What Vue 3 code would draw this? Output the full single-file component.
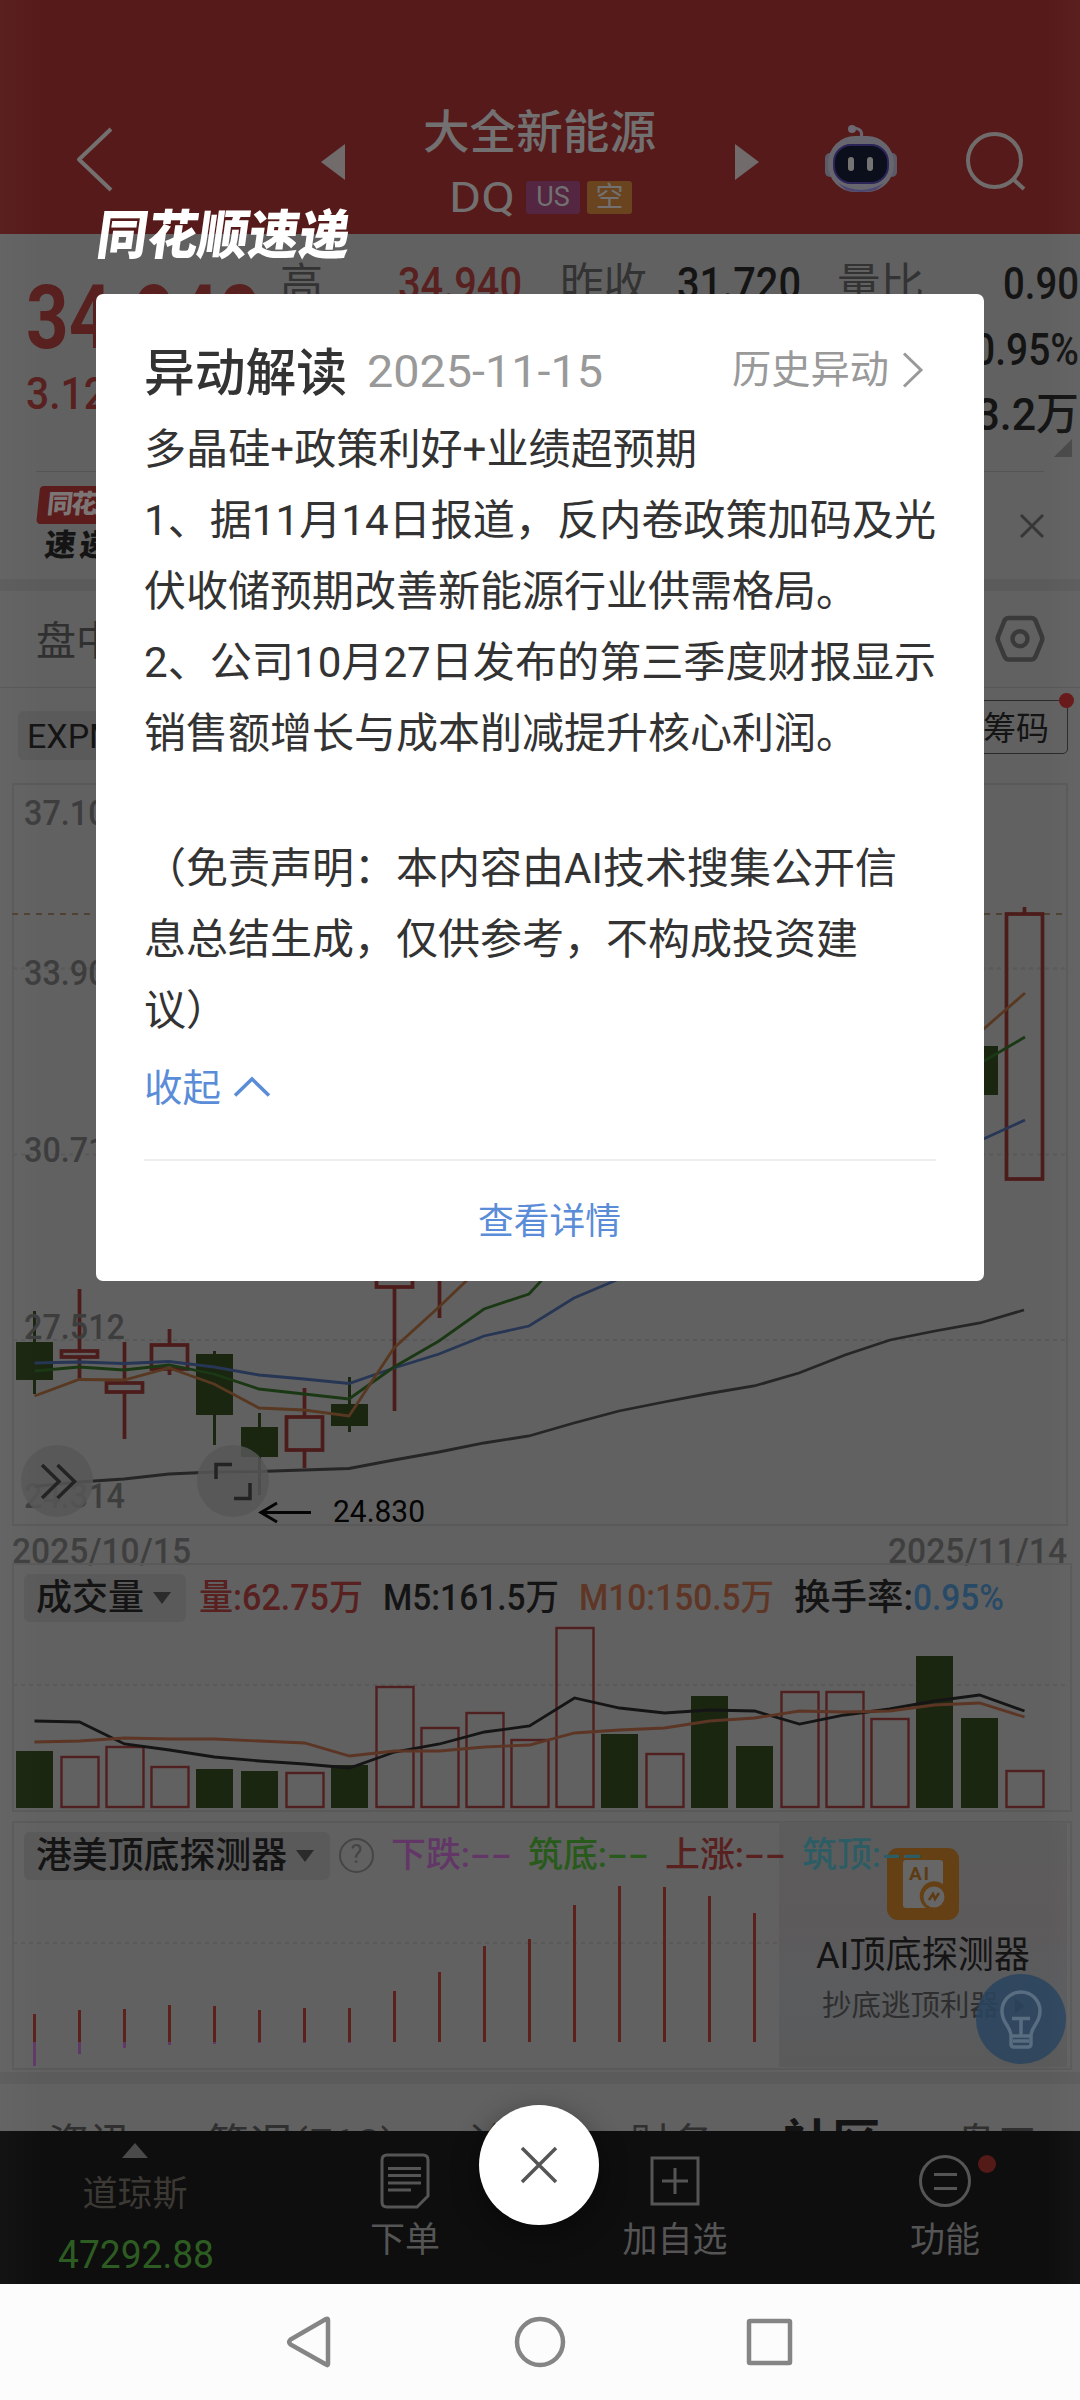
<script setup>
// Stretches a text run to a given width while keeping it in the flow
const vFit = {
  mounted(el, { value }) {
    const natural = el.getBoundingClientRect().width
    el.style.transform = `scaleX(${value / natural})`
    el.style.marginRight = `${value - natural}px`
  },
}

const cx = (i) => 34.5 + i * 45

const candles = [
  { i: 0, up: false, t: 1342, b: 1380, h: 1311, l: 1394 },
  { i: 1, up: true, t: 1351, b: 1357, h: 1289, l: 1380 },
  { i: 2, up: true, t: 1383, b: 1392, h: 1342, l: 1439 },
  { i: 3, up: true, t: 1345, b: 1369, h: 1329, l: 1375 },
  { i: 4, up: false, t: 1354, b: 1415, h: 1351, l: 1445 },
  { i: 5, up: false, t: 1427, b: 1457, h: 1413, l: 1495 },
  { i: 6, up: true, t: 1417, b: 1450, h: 1388, l: 1468 },
  { i: 7, up: false, t: 1404, b: 1426, h: 1377, l: 1432 },
  { i: 8, up: true, t: 1210, b: 1287, h: 1190, l: 1411 },
  { i: 9, up: true, t: 1160, b: 1240, h: 1140, l: 1318 },
  { i: 21, up: false, t: 1046, b: 1095, h: 1040, l: 1095 },
  { i: 22, up: true, t: 914, b: 1179, h: 907, l: 1179 },
]
const priceLabels = [
  { v: '37.108', y: 825 },
  { v: '33.909', y: 985 },
  { v: '30.711', y: 1162 },
  { v: '27.512', y: 1339 },
  { v: '24.314', y: 1508 },
]
const ma5 = '34.5,1396 79,1379.5 124,1380 169,1368 214,1384 259,1408 304,1410 349,1416 394,1348 439,1307 484,1264 529,1210 800,1120 979,1033 1025,993'
const ma10 = '34.5,1371 79,1367 124,1370 169,1365 214,1374 259,1389 304,1394 349,1399 394,1367 439,1341 484,1309 529,1294 574,1245 800,1150 979,1064 1025,1037'
const ma20 = '34.5,1363 79,1362 124,1363.5 169,1361.5 214,1367 259,1375 304,1379 349,1383.5 394,1368 439,1354 484,1336 529,1326 574,1298 619,1279 800,1200 979,1141 1025,1120'
const ma60 = '34.5,1486.5 79,1482 124,1479 169,1474 214,1472 259,1471.5 304,1470 349,1468.5 394,1460 439,1452 484,1443 529,1436 574,1423 619,1411 664,1402 709,1393.5 754,1386 799,1373 845,1355 890,1340 935,1331 980,1323 1024,1310'

const volumes = [
  [1751, 0], [1756, 1], [1746, 1], [1766, 1], [1769, 0], [1771, 0], [1772, 1], [1765, 0],
  [1686, 1], [1727, 1], [1712, 1], [1739, 1], [1627, 1], [1734, 0], [1753, 1], [1696, 0],
  [1746, 0], [1691, 1], [1691, 1], [1718, 1], [1656, 0], [1718, 0], [1770, 1],
]
const toPoints = (ys) => ys.map((y, i) => `${cx(i)},${y}`).join(' ')
const volM5 = toPoints([1721, 1722, 1744, 1750, 1757, 1761, 1764, 1768, 1752, 1744, 1732, 1726, 1698, 1708, 1713, 1710, 1711, 1724, 1715, 1709, 1701, 1695, 1711])
const volM10 = toPoints([1742, 1741, 1738, 1739, 1739, 1741, 1743, 1756, 1751, 1751, 1747, 1745, 1733, 1730, 1728, 1721, 1718, 1711, 1712, 1711, 1705, 1703, 1717])

const signals = [2014, 2010, 2009, 2005, 2006, 2010, 2008, 2008, 1991, 1972, 1946, 1939, 1905, 1886, 1887, 1896, 1913]
const drops = [2066, 2054, 2048, 2045, 2044, 2043, 2043, 2043]
const states = [
  { name: '下跌', tone: 'purple' },
  { name: '筑底', tone: 'green' },
  { name: '上涨', tone: 'red' },
  { name: '筑顶', tone: 'teal' },
]
</script>

<template>
  <div class="screen">
    <header class="topbar">
      <svg class="back" width="60" height="80" viewBox="66 120 60 80"><path d="M111 129 79 159.500 111 190" /></svg>
      <svg class="tri" width="26" height="36" viewBox="0 0 26 36"><path d="M25 0V36L1 18Z" /></svg>
      <div class="stock">
        <div class="name"><span v-fit="233">大全新能源</span></div>
        <div class="code">
          <span v-fit="66" class="ticker">DQ</span>
          <span class="tag us">US</span>
          <span class="tag short">空</span>
        </div>
      </div>
      <svg class="tri right" width="26" height="36" viewBox="0 0 26 36"><path d="M1 0V36L25 18Z" /></svg>
      <svg class="robot" width="76" height="72" viewBox="823 124 76 72">
        <path d="M861 138q3-9-7-10" fill="none" stroke="#6b6570" stroke-width="3" />
        <circle cx="852" cy="129" r="4" fill="#6d6872" />
        <rect x="825" y="153" width="10" height="24" rx="5" fill="#5b5a66" />
        <rect x="887" y="153" width="10" height="24" rx="5" fill="#5b5a66" />
        <rect x="828" y="136" width="66" height="56" rx="27" fill="#67656d" />
        <path d="M838 183q23 14 46 0l-8 7q-15 4-30 0z" fill="#4b4672" />
        <rect x="834" y="145" width="54" height="38" rx="17" fill="#0b0e1b" stroke="#2b2459" stroke-width="2" />
        <rect x="848" y="157" width="6" height="14" rx="3" fill="#747474" />
        <rect x="867" y="157" width="6" height="14" rx="3" fill="#747474" />
      </svg>
      <svg class="search" width="66" height="66" viewBox="962 128 66 66"><circle cx="994.500" cy="160.500" r="26.500" /><path d="M1013 179 1024 189" /></svg>
    </header>

    <section class="quote">
      <div class="price"><b v-fit="235">34.940</b><span v-fit="104">3.120</span></div>
      <div class="cell k1"><span v-fit="43" class="k">高</span></div>
      <div class="cell v1 red"><span v-fit="124">34.940</span></div>
      <div class="cell k2"><span v-fit="87" class="k">昨收</span></div>
      <div class="cell v2"><span v-fit="124">31.720</span></div>
      <div class="cell k3"><span v-fit="87" class="k">量比</span></div>
      <div class="stack">
        <div><span v-fit="76">0.90</span></div>
        <div><span v-fit="106">0.95%</span></div>
        <div><span v-fit="128">13.2万</span></div>
      </div>
      <svg class="corner" width="18" height="18"><path d="M18 0V18H0Z" /></svg>
    </section>

    <section class="express">
      <div class="badge">
        <div class="badge-top">同花顺</div>
        <div class="badge-bottom">速递</div>
      </div>
      <svg width="26" height="26" viewBox="0 0 26 26"><path d="M2 2 24 24M24 2 2 24" /></svg>
    </section>
    <div class="band"></div>

    <section class="periods">
      <span>盘中</span>
      <svg width="52" height="50" viewBox="994 614 52 50">
        <path d="M1008.500 618H1031.500Q1034 618 1035.500 620.500L1041.500 635.500Q1043 639 1041.500 642L1035.500 656.500Q1034 659.500 1031.500 659.500H1008.500Q1006 659.500 1004.500 656.500L998.500 642Q997 639 998.500 635.500L1004.500 620.500Q1006 618 1008.500 618Z" />
        <circle cx="1020" cy="638.700" r="7.500" />
      </svg>
    </section>

    <section class="selectors">
      <span class="pill expma">EXPMA</span>
      <span class="chips">筹码<i></i></span>
    </section>

    <svg class="kline" width="1080" height="755" viewBox="0 783 1080 755">
      <g class="frame">
        <rect x="13" y="784" width="1054" height="741" />
        <path stroke-dasharray="4 4" d="M13 968.500H1067M13 1154.500H1067M13 1340H1067" />
      </g>
      <path d="M12 914H1067" stroke="#4e4131" stroke-width="2" stroke-dasharray="6 6" />
      <g v-for="c in candles" :key="c.i" :class="c.up ? 'up' : 'down'">
        <line :x1="cx(c.i)" :x2="cx(c.i)" :y1="c.h" :y2="c.up ? c.t : c.l" />
        <line v-if="c.up" :x1="cx(c.i)" :x2="cx(c.i)" :y1="c.b" :y2="c.l" />
        <rect v-if="c.up" :x="cx(c.i) - 18" :y="c.t" width="36" :height="c.b - c.t" />
        <rect v-else :x="cx(c.i) - 18.500" :y="c.t" width="37" :height="c.b - c.t" />
      </g>
      <text v-for="p in priceLabels" :key="p.v" class="axis" x="24" :y="p.y" textLength="101" lengthAdjust="spacingAndGlyphs">{{ p.v }}</text>
      <g fill="none" stroke-width="2.800">
        <polyline :points="ma60" stroke="#262626" />
        <polyline :points="ma20" stroke="#263654" />
        <polyline :points="ma10" stroke="#1b3815" />
        <polyline :points="ma5" stroke="#583820" />
      </g>
      <g class="round">
        <circle cx="57" cy="1481" r="36" /><circle cx="233" cy="1481" r="36" />
        <path d="M42 1465 59 1481.500 42 1498M57.500 1465 74.500 1481.500 57.500 1498M216 1479V1464.500H232M250 1483V1498.500H234" />
      </g>
      <path d="M311 1512.500H261M277 1503 261 1512.500 277 1522" fill="none" stroke="#050505" stroke-width="3" />
      <text x="333" y="1522" font-size="32" fill="#050505" textLength="92" lengthAdjust="spacingAndGlyphs">24.830</text>
    </svg>
    <div class="dates"><span v-fit="179">2025/10/15</span><span v-fit="179">2025/11/14</span></div>

    <section class="volume">
      <div class="legend">
        <span class="pill"><span v-fit="108">成交量</span><i></i></span>
        <span v-fit="164" class="red l1">量:62.75万</span>
        <span v-fit="176" class="l2">M5:161.5万</span>
        <span v-fit="195" class="orange l3">M10:150.5万</span>
        <span v-fit="119" class="l4">换手率:</span>
        <span v-fit="91" class="blue">0.95%</span>
      </div>
      <svg width="1080" height="198" viewBox="0 1623 1080 198">
        <path class="dots" d="M13 1685H1067" />
        <template v-for="(v, i) in volumes" :key="i">
          <rect v-if="v[1]" :x="cx(i) - 18" :y="v[0] + 1" width="37" :height="1806 - v[0]" fill="none" stroke="#502020" stroke-width="2.400" />
          <rect v-else :x="cx(i) - 18.500" :y="v[0]" width="37" :height="1808 - v[0]" fill="#1a2610" />
        </template>
        <polyline :points="volM5" fill="none" stroke="#151515" stroke-width="2.800" />
        <polyline :points="volM10" fill="none" stroke="#5c3524" stroke-width="2.800" />
      </svg>
    </section>

    <section class="detector">
      <div class="legend">
        <span class="pill"><span v-fit="251">港美顶底探测器</span><i></i></span>
        <span class="help">?</span>
        <div class="states">
          <div v-for="s in states" :key="s.name" :class="s.tone">
            <span v-fit="79">{{ s.name }}:</span><span v-fit="42">--</span>
          </div>
        </div>
      </div>
      <div class="detector-body">
        <svg width="779" height="185" viewBox="0 1881 779 185">
          <path class="dots" d="M13 1943H779" />
          <line v-for="(y, i) in drops" :key="'d' + i" :x1="cx(i)" :x2="cx(i)" y1="2042" :y2="y" stroke="#603a66" stroke-width="3" />
          <line v-for="(y, i) in signals" :key="'s' + i" :x1="cx(i)" :x2="cx(i)" :y1="y" y2="2042" stroke="#5c211d" stroke-width="3" />
        </svg>
      </div>
      <div class="promo">
        <svg width="72" height="72" viewBox="887 1848 72 72">
          <rect x="887" y="1848" width="72" height="72" rx="11" fill="#644014" />
          <path d="M906 1860H940Q943 1860 943 1863V1884A14 14 0 0 0 926 1908H906Q903 1908 903 1905V1863Q903 1860 906 1860Z" fill="#666" />
          <text x="909" y="1880" font-size="19" font-weight="700" fill="#5d3b14" textLength="20">AI</text>
          <circle cx="934" cy="1897" r="10.500" fill="#666" />
          <path d="M929 1900 933 1894 935 1899 939 1893" fill="none" stroke="#5d3b14" stroke-width="2.500" />
        </svg>
        <div class="promo-title"><span v-fit="214">AI顶底探测器</span></div>
        <div class="promo-sub"><span v-fit="177">抄底逃顶利器</span><i></i></div>
      </div>
      <svg class="bulb" width="90" height="90" viewBox="976 1974 90 90">
        <circle cx="1021" cy="2019" r="45" />
        <path d="M1011 2036C1011 2026 1002 2024 1002 2011A19 19 0 0 1 1040 2011C1040 2024 1031 2026 1031 2036ZM1011 2036V2044Q1011 2047 1014 2047H1028Q1031 2047 1031 2044V2036M1013 2041H1029M1021 2036V2019M1012 2018.500H1030" />
      </svg>
    </section>
    <div class="band low"></div>

    <nav class="tabs">
      <div class="tab t1"><span v-fit="83">资讯</span></div>
      <div class="tab t2"><span v-fit="190">简况(F10)</span></div>
      <div class="tab t3"><span v-fit="83">论股</span></div>
      <div class="tab t4"><span v-fit="83">财务</span></div>
      <div class="tab active"><b v-fit="98">社区</b></div>
      <div class="tab"><span v-fit="83">盘口</span></div>
    </nav>

    <footer class="actions">
      <div class="index">
        <svg width="26" height="15"><path d="M13 0 26 15H0Z" fill="#4a4a4a" /></svg>
        <div class="index-name">道琼斯</div>
        <div class="index-value"><span v-fit="156">47292.88</span></div>
      </div>
      <div class="action">
        <svg width="54" height="58" viewBox="378 2152 54 58"><path d="M387 2155H423Q428 2155 428 2160V2196L417 2207H387Q382 2207 382 2202V2160Q382 2155 387 2155ZM388 2168.500H421M388 2175.500H421M388 2183H421M388 2190H411" /></svg>
        <span>下单</span>
      </div>
      <div class="action">
        <svg width="54" height="58" viewBox="647 2152 54 58"><path d="M651 2158H697V2204H651ZM674 2168V2194M661 2181H687" /></svg>
        <span>加自选</span>
      </div>
      <div class="action">
        <svg width="54" height="58" viewBox="917 2152 54 58"><circle cx="944" cy="2181" r="24.500" /><path d="M933 2174.500H956M933 2188.500H956" /></svg>
        <span>功能</span>
        <i></i>
      </div>
    </footer>

    <div class="sysnav">
      <svg width="46" height="56" viewBox="286 2314 46 56"><path d="M328 2320V2364Q328 2366 326 2364.500L290.500 2344.500Q288 2342 290.500 2339.500L326 2319Q328 2318 328 2320Z" /></svg>
      <svg width="54" height="54" viewBox="513 2315 54 54"><circle cx="540" cy="2342" r="23" /></svg>
      <svg width="50" height="50" viewBox="744 2317 50 50"><rect x="749" y="2321" width="41" height="42" rx="1" /></svg>
    </div>
    <div class="edge"></div>

    <div class="layer">
      <div class="brand"><span v-fit="262">同花顺速递</span></div>
      <div class="card">
        <div class="card-head">
          <h1 v-fit="203">异动解读</h1>
          <span v-fit="236" class="date">2025-11-15</span>
          <div class="history"><span v-fit="157">历史异动</span></div>
          <svg width="22" height="36" viewBox="902 350 22 36"><path d="M904 351.500 921 368 904 384.500" /></svg>
        </div>
        <div class="text">
          <div><span v-fit="553">多晶硅+政策利好+业绩超预期</span></div>
          <div><span v-fit="792">1、据11月14日报道，反内卷政策加码及光</span></div>
          <div><span v-fit="714">伏收储预期改善新能源行业供需格局。</span></div>
          <div><span v-fit="792">2、公司10月27日发布的第三季度财报显示</span></div>
          <div><span v-fit="714">销售额增长与成本削减提升核心利润。</span></div>
          <div class="disclaimer"><span v-fit="753">（免责声明：本内容由AI技术搜集公开信</span></div>
          <div><span v-fit="714">息总结生成，仅供参考，不构成投资建</span></div>
          <div><span v-fit="84">议）</span></div>
        </div>
        <div class="fold">
          <span v-fit="77">收起</span>
          <svg width="38" height="22" viewBox="233 1078 38 22"><path d="M235 1097.500 252 1081 269 1097.500" /></svg>
        </div>
        <div class="more"><span v-fit="143">查看详情</span></div>
      </div>
      <button class="close"><svg width="38" height="38" viewBox="0 0 38 38"><path d="M2 2 36 36M36 2 2 36" /></svg></button>
    </div>
  </div>
</template>

<style>
body { margin: 0; background: #616161; }
</style>

<style scoped>
* { box-sizing: border-box; }
.screen {
  position: relative; width: 1080px; height: 2400px; overflow: hidden;
  display: flex; flex-direction: column; background: #616161; color: #141414;
  font-family: Roboto, "Noto Sans CJK SC", sans-serif;
}
span, b, h1 { white-space: nowrap; transform-origin: left center; display: inline-block; flex: none; }
svg { display: block; flex: none; }
i { display: block; flex: none; }
.red { color: #58201e; } .orange { color: #5f3625; } .blue { color: #284a66; }
.purple { color: #623767; } .green { color: #285a1c; } .teal { color: #2c5d65; }

.topbar { height: 234px; flex: none; padding: 84px 0 0 66px; display: flex; background: #561a1a; color: #727070; }
.back { margin: 36px 194px 0 0; }
.back path { fill: none; stroke: #747070; stroke-width: 4; stroke-linejoin: round; }
.tri { margin-top: 60px; } .tri path { fill: #716b6b; }
.stock { width: 388px; text-align: center; padding-top: 20px; }
.name { font-size: 46px; line-height: 56px; height: 60px; padding-right: 2px; font-weight: 500; }
.code { display: flex; height: 64px; align-items: center; padding: 2px 0 0 103px; }
.ticker { font-size: 43px; }
.tag { height: 33px; line-height: 33px; border-radius: 3px; font-size: 28px; text-align: center; }
.us { background: #552641; width: 54px; font-size: 27px; margin-left: 11px; }
.short { background: #6a441f; width: 45px; margin-left: 7px; }
.robot { margin: 40px 0 0 63px; }
.search { margin: 44px 0 0 63px; }
.search circle, .search path { fill: none; stroke: #706c6c; stroke-width: 4; }

.quote { position: relative; height: 237px; flex: none; display: flex; font-size: 44px; font-weight: 500; line-height: 64px; padding-top: 16px; }
.price { width: 280px; flex: none; padding-left: 26px; color: #58201e; display: flex; flex-direction: column; align-items: flex-start; }
.price b { font-size: 89px; line-height: 100px; height: 110px; margin-top: 18px; }
.price > span { font-size: 44px; line-height: 60px; margin-top: -14px; }
.k { color: #333; font-weight: 400; font-size: 43px; line-height: 62px; }
.cell { padding-top: 2px; flex: none; }
.k1 { width: 118px; } .v1 { width: 162px; } .k2 { width: 117px; } .v2 { width: 160px; } .k3 { width: 106px; }
.stack { flex: 1; display: flex; flex-direction: column; align-items: flex-end; padding: 2px 1px 0 0; line-height: 65.500px; }
.corner { position: absolute; right: 8px; bottom: 14px; } .corner path { fill: #484848; }
.express { height: 108px; flex: none; margin: 0 36px; border-top: 1px solid #555; display: flex; justify-content: space-between; align-items: center; }
.express svg path { stroke: #373737; stroke-width: 3; }
.express > svg { margin-right: -1px; }
.badge { width: 110px; transform: skewX(-6deg); font-weight: 900; font-size: 26px; line-height: 37px; letter-spacing: -2px; margin-top: 0; }
.badge-top { background: #5c1c1c; color: #7d7676; border-radius: 4px; padding-left: 9px; height: 38px; }
.badge-bottom { font-size: 31px; padding: 3px 0 0 11px; letter-spacing: 4px; line-height: 38px; }
.band { height: 12px; flex: none; background: #5b5b5b; }
.periods { height: 97px; flex: none; border-bottom: 1px solid #565656; display: flex; justify-content: space-between; align-items: center; padding: 0 34px 3px 36px; font-size: 40px; color: #303030; }
.periods svg { position: relative; top: 1px; }
.periods path, .periods circle { fill: none; stroke: #3a3a3a; stroke-width: 4.500; }
.selectors { height: 95px; flex: none; display: flex; justify-content: space-between; padding: 12px 12px 0 18px; }
.pill { display: flex; align-items: center; background: #5a5a5a; border-radius: 6px; }
.expma { height: 49px; margin-top: 11px; padding: 0 12px 0 9px; font-size: 34px; }
.chips { position: relative; height: 54px; line-height: 56px; width: 130px; border: 1.500px solid #292929; border-radius: 5px; font-size: 33px; text-align: right; padding-right: 18px; }
.chips i { position: absolute; right: -7px; top: -8px; width: 15px; height: 15px; border-radius: 50%; background: #671718; }

.frame rect, .frame path { fill: none; stroke: #595959; stroke-width: 2; }
.kline text { font-family: Roboto, sans-serif; }
.axis { font-size: 35px; fill: #3d3d3d; font-weight: 500; }
.up line, .up rect { stroke: #4c1c1a; stroke-width: 3.700; fill: none; }
.down line { stroke: #1a2610; stroke-width: 3; } .down rect { fill: #1a2610; }
.round circle { fill: #575757; fill-opacity: .85; }
.round path { fill: none; stroke: #232323; stroke-width: 3.500; }
.dates { height: 25px; flex: none; display: flex; justify-content: space-between; line-height: 27px; padding: 0 13px 0 12px; font-size: 35px; color: #3f3f3f; font-weight: 500; }
.volume { height: 258px; flex: none; position: relative; display: flex; flex-direction: column; }
.volume::before, .detector::before { content: ''; position: absolute; left: 12px; width: 1056px; top: 0; height: 245px; border: 2px solid #595959; }
.legend { display: flex; align-items: center; height: 60px; flex: none; padding: 10px 0 0 24px; font-size: 36px; line-height: 50px; position: relative; font-weight: 500; }
.legend .pill { height: 48px; padding: 0 15px 0 12px; margin-right: 13px; font-size: 36px; width: 162px; }
.pill i { border: 9px solid transparent; border-top: 12px solid #2b2b2b; border-bottom: 0; margin-left: 9px; }
.legend .l2 { position: relative; left: 20px; }
.legend .l3 { position: relative; left: 40px; }
.legend .l4, .legend .blue { position: relative; left: 60px; }
.volume svg { position: relative; }
.dots { stroke: #595959; stroke-width: 2; stroke-dasharray: 4 4; }
.detector { height: 251px; flex: none; position: relative; }
.detector .legend { z-index: 2; font-size: 35px; padding-top: 9px; }
.detector .legend .pill { margin-right: 9px; width: 306px; padding-right: 0; font-size: 36px; }
.legend > .help { width: 35px; height: 35px; border: 2.500px solid #454545; border-radius: 50%; text-align: center; line-height: 30px; font-size: 25px; font-weight: 400; color: #454545; }
.states { display: flex; gap: 16px; margin: 0 0 0 17px; }
.states > div { display: flex; flex: none; }
.detector-body { position: relative; }
.promo { position: absolute; left: 779px; top: 1px; width: 288px; height: 245px; background: linear-gradient(#5c5c5c, #5d5a5b 40%, #5a5c5e 70%, #5a5a5a); display: flex; flex-direction: column; align-items: center; padding-top: 26px; }
.promo-title { font-size: 37px; line-height: 50px; margin-top: 11px; }
.promo-sub { font-size: 29px; line-height: 44px; color: #2e2e2e; display: flex; align-items: center; margin-top: 3px; }
.promo-sub i { border: 8px solid transparent; border-left: 9px solid #2e2e2e; border-right: 0; margin-left: 16px; }
.bulb { position: absolute; left: 976px; top: 153px; }
.bulb circle { fill: #29445f; fill-opacity: .85; } .bulb path { fill: none; stroke: #596d80; stroke-width: 3.500; }
.tabs { height: 47px; flex: none; overflow: hidden; display: flex; padding: 33px 0 0 48px; font-size: 41px; line-height: 54px; color: #303030; }
.tab { flex: none; }
.t1 { width: 158px; } .t2 { width: 262px; } .t3 { width: 162px; } .t4 { width: 153px; }
.tab.active { width: 172px; color: #141414; font-size: 47px; line-height: 50px; }

.actions { height: 153px; flex: none; background: #0e0e0e; display: flex; color: #555; font-size: 35px; }
.index { width: 270px; display: flex; flex-direction: column; align-items: center; padding-top: 12px; }
.index-name { color: #3c3935; line-height: 52px; margin-top: 11px; }
.index-value { color: #2d5c22; font-size: 38px; line-height: 52px; margin-top: 8px; padding-left: 2px; }
.action { width: 270px; position: relative; display: flex; flex-direction: column; align-items: center; padding-top: 21px; }
.action svg { fill: none; stroke: #555; stroke-width: 3; }
.action span { line-height: 50px; margin-top: 6px; }
.action i { position: absolute; width: 18px; height: 18px; border-radius: 50%; background: #541a17; left: 168px; top: 24px; }
.sysnav { height: 116px; flex: none; background: #fcfcfc; display: flex; align-items: center; padding-left: 286px; fill: none; stroke: #858585; stroke-width: 4.500; }
.sysnav svg:nth-child(2) { margin: 0 177px 0 181px; }

.edge { position: absolute; inset: 0 0 116px; background: linear-gradient(90deg, rgba(255, 255, 255, .022), transparent 45px, transparent 1045px, rgba(255, 255, 255, .022)); pointer-events: none; }
.layer { position: absolute; inset: 0; display: flex; flex-direction: column; padding: 200px 96px 0; }
.brand { height: 94px; flex: none; color: #fff; font-size: 53px; line-height: 72px; font-weight: 900; transform: skewX(-8deg); transform-origin: left center; }
.card { height: 987px; flex: none; background: #fff; border-radius: 7px; padding: 42px 48px 0; display: flex; flex-direction: column; color: #333; }
.card-head { display: flex; align-items: center; height: 72px; flex: none; padding-top: 3px; }
h1 { font-size: 51px; font-weight: 500; margin: 0; line-height: 70px; }
.date { position: relative; left: 20px; color: #999; font-size: 44px; margin-top: -3px; }
.history { color: #999; font-size: 39px; margin: -7px 13px 0 auto; line-height: 56px; }
.card-head svg { margin: -7px 12px 0 0; fill: none; stroke: #999; stroke-width: 3; }
.text { padding-top: 6px; font-size: 42px; line-height: 71px; }
.text > div { height: 71px; }
.text .disclaimer { margin-top: 64px; }
.fold { display: flex; align-items: center; color: #5a8cd8; font-size: 38px; height: 64px; margin-top: 6px; }
.fold svg { margin: 6px 0 0 12px; fill: none; stroke: #5a8cd8; stroke-width: 3.500; }
.more { margin-top: auto; height: 122px; border-top: 2px solid #eee; text-align: center; color: #5a8cd8; font-size: 36px; line-height: 123px; padding-left: 18px; }
.close { width: 120px; height: 120px; flex: none; border: 0; border-radius: 50%; background: #fff; margin: 824px 0 0 383px; display: flex; align-items: center; justify-content: center; padding: 0; box-shadow: 0 8px 28px rgba(0, 0, 0, .4); }
.close path { stroke: #555; stroke-width: 3.500; }
</style>
